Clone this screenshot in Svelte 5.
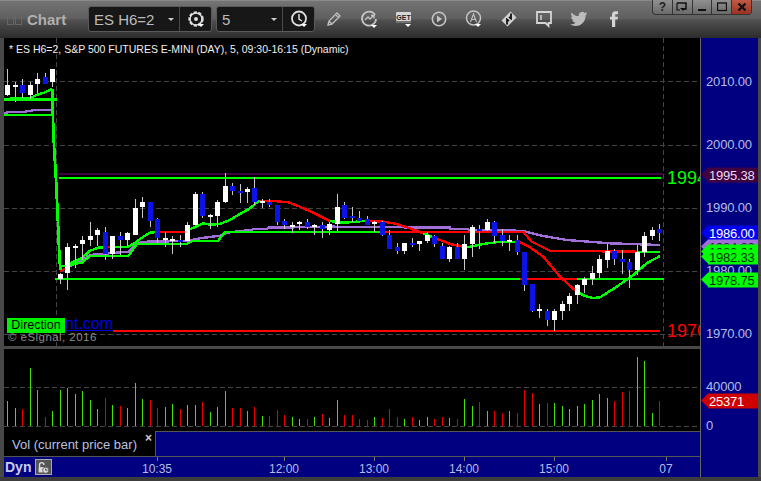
<script>
  // [high, bodyTop, bodyBottom, low, colour]  w = white, b = blue
  const raw = `69 85 95 96 w,82 85 87 102 w,79 85 93 98 b,82 85 95 99 w,73 79 84 93 w,73 77 84 84 b,69 69 82 87 w,273 274 279 284 w,243 247 273 290 w,244 246 248 268 w,236 240 244 260 w,222 236 240 246 w,228 230 235 246 w,227 232 254 260 b,236 236 254 259 w,232 236 240 255 b,232 233 240 246 w,199 208 235 235 w,197 202 207 218 w,202 202 221 227 b,218 219 238 243 b,232 238 240 247 w,236 239 241 254 w,235 240 242 247 b,222 225 241 241 w,192 194 225 225 w,192 194 216 218 b,214 215 217 229 w,200 202 216 227 w,173 186 202 203 w,183 186 191 195 b,184 191 193 203 b,187 189 192 203 w,177 188 202 205 b,199 201 203 208 w,199 202 205 207 b,205 205 222 225 b,219 221 225 229 b,222 225 227 233 w,221 222 224 230 w,219 222 227 229 b,224 225 227 235 w,222 225 229 238 b,222 224 230 235 w,194 207 224 231 w,202 205 218 219 b,207 216 218 222 b,211 218 221 222 b,216 219 225 225 b,221 222 224 232 w,221 222 235 236 b,230 235 249 249 b,243 247 251 254 b,243 243 251 254 w,238 243 245 247 b,241 241 244 251 w,232 235 241 243 w,235 236 244 247 b,243 246 259 259 b,246 247 259 262 w,243 247 259 259 b,235 244 259 270 w,225 227 244 257 w,225 229 231 249 b,219 222 230 231 w,221 222 236 243 b,229 235 241 246 b,235 240 242 251 w,235 240 252 255 b,252 252 285 291 b,284 284 311 312 b,304 309 311 318 w,309 311 320 326 b,309 311 320 331 w,301 304 311 320 w,293 296 304 311 w,284 285 295 304 w,277 279 285 293 w,266 273 279 285 w,255 259 273 278 w,244 251 260 268 w,249 251 259 265 b,250 259 262 274 b,259 262 270 288 b,245 252 270 275 w,232 236 252 257 w,227 230 236 240 w,224 229 233 241 b`;
  const barX = (i) => 7 + (i <= 32 ? Math.ceil(7.5 * i) : Math.floor(7.5 * i));
  const candles = raw.split(',').map((s, i) => {
    const p = s.split(' ');
    return { x: barX(i), hi: +p[0], top: +p[1], bot: +p[2], lo: +p[3], c: p[4] };
  });
  const volRaw = `401g 408g 409r 368g 390g 417r 411g 390g 388g 394g 391g 400g 409g 398r 405g 406r 408g 383g 399g 400r 408r 407g 404g 409r 405g 405g 402r 412g 407g 391g 408r 408r 411g 407r 416g 416r 410r 415r 417g 419g 419r 417g 414r 418g 400g 415r 415r 419r 420r 417g 418r 409r 417r 419g 417r 420g 417g 419r 417r 418g 419r 399g 406g 402r 411g 411r 413r 411g 413r 390r 393r 404g 403r 403g 406g 409g 406g 404g 400g 394g 398g 401r 392r 391r 357g 361g 413g 401r`;
  const vols = volRaw.split(' ').map((s, i) => ({ x: barX(i), y: parseInt(s), c: s.endsWith('g') ? '#44e000' : '#e80000' }));

  const conv = (a, ox, oy) => { let r = ''; for (let i = 0; i < a.length; i += 2) r += `${(ox + a[i] / 3).toFixed(1)},${(oy + a[i + 1] / 3).toFixed(1)} `; return r; };
  const z3 = (...a) => conv(a, 0, 60), z4 = (...a) => conv(a, 250, 160), z5 = (...a) => conv(a, 500, 160);

  const purple = [
    z3(12,159,30,156,75,155,105,150,157,149),
    z3(210,618,245,602,270,585,300,582,385,575,410,550,440,545,560,543,600,535,660,527,680,518,750,510) + z4(0,212,10,207,50,207,55,203,250,200,600,203,600,207,650,207,660,210,750,210) + z5(0,210,70,213,130,228,200,240,330,250,480,255)
  ];
  const greens = [
    z3(12,164,157,164),
    z3(180,620,245,608,270,588,385,588,410,553,560,552,580,542,655,542,675,516,750,515) + z4(0,215,395,215),
    z3(205,612,245,595,270,572,295,563,325,562),
    z3(345,561,385,560,405,548,430,530,450,518,480,515),
    z3(555,515,570,508,610,490,630,494,660,492,690,480,720,462,750,445) + z4(20,128,30,122),
    z4(240,183,280,188,310,186,345,182),
    z4(520,220,545,230),
    z4(640,260,660,260,700,252,750,245) + z5(60,245),
    z5(230,395,255,408,280,414,300,412,350,380,400,345,440,310,480,288)
  ];
  const reds = [
    z3(180,635,195,625),
    z3(325,561,345,561),
    z3(480,516,555,516),
    z4(30,122,80,124,115,127,145,138,190,158,240,183),
    z4(345,182,400,185,440,192,480,205,520,220),
    z4(545,230,570,240,600,252,640,260),
    z5(60,247,90,262,130,290,180,350,230,395),
    z4(395,215,750,215) + z5(70,215,95,245,150,272,480,276)
  ];
  const grid = [81.5, 145.5, 208.5, 271.5, 334.5];
  const prices = [
    { t: '2010.00', y: 82 }, { t: '2000.00', y: 145 }, { t: '1990.00', y: 208 }, { t: '1980.00', y: 271 }, { t: '1970.00', y: 334 }
  ];
  const tags = [
    { t: '1995.38', y: 174.5, bg: '#400040', fg: '#e8dcec' },
    { t: '1986.00', y: 232.5, bg: '#0000f0', fg: '#ffffff' },
    { t: '1984.33', y: 247, bg: '#a070d8', fg: '#1a1a1a' },
    { t: '1982.91', y: 252, bg: '#00ff00', fg: '#003000' },
    { t: '1982.33', y: 257, bg: '#00ff00', fg: '#003000' },
    { t: '1978.75', y: 279.5, bg: '#00ff00', fg: '#003000' }
  ];
  const times = [
    { t: '10:35', x: 157 }, { t: '12:00', x: 284 }, { t: '13:00', x: 374 }, { t: '14:00', x: 464 }, { t: '15:00', x: 554 }, { t: '07', x: 666 }
  ];
</script>

<div class="window">
  <header class="toolbar">
    <span class="grip"><i></i><i></i></span>
    <span class="title">Chart</span>
    <div class="combo first">
      <span class="value">ES H6=2</span><span class="caret"></span>
      <button class="cbtn" aria-label="symbol">
        <svg width="20" height="20" viewBox="0 0 20 20"><circle cx="10" cy="10" r="6.5" fill="none" stroke="#ddd" stroke-width="2.4" stroke-dasharray="3 1.6"/><circle cx="10" cy="10" r="6" fill="none" stroke="#ddd" stroke-width="1.4"/><circle cx="10" cy="10" r="2" fill="#ddd"/><path d="M12 15h6l-3 3z" fill="#fff"/></svg>
      </button>
    </div>
    <div class="combo second">
      <span class="value">5</span><span class="caret"></span>
      <button class="cbtn" aria-label="interval">
        <svg width="20" height="20" viewBox="0 0 20 20"><circle cx="10" cy="9.5" r="7" fill="none" stroke="#ddd" stroke-width="1.8"/><path d="M10 5v5l3 2" fill="none" stroke="#ddd" stroke-width="1.5"/><path d="M12 15h6l-3 3z" fill="#fff"/></svg>
      </button>
    </div>
    <div class="tools">
      <span><svg width="18" height="18" viewBox="0 0 18 18"><path d="M3 15l1-4 8-8 3 3-8 8zM4 11l3 3M10.500 4.500l3 3" fill="none" stroke="#bbb" stroke-width="1.4"/></svg></span>
      <span><svg width="18" height="20" viewBox="0 0 18 20"><path d="M15 6a7 7 0 1 0 1 4" fill="none" stroke="#c4c4c4" stroke-width="1.8"/><path d="M5 11l3-3 2 2 3-3M11 6.500h3v3" fill="none" stroke="#c4c4c4" stroke-width="1.3"/><path d="M11 16h6l-3 3z" fill="#fff"/></svg></span>
      <span><svg width="18" height="20" viewBox="0 0 18 20"><rect x="1" y="3" width="15" height="9" rx="1" fill="#d6d6d6"/><text x="8.500" y="10.500" text-anchor="middle" class="gettxt">GET</text><path d="M1 13h15" stroke="#999"/><path d="M10 15h6l-3 3z" fill="#fff"/></svg></span>
      <span><svg width="18" height="18" viewBox="0 0 18 18"><circle cx="9" cy="9" r="6.700" fill="none" stroke="#c4c4c4" stroke-width="1.600"/><path d="M7 5.500l5 3.500-5 3.500z" fill="#c4c4c4"/></svg></span>
      <span><svg width="20" height="20" viewBox="0 0 20 20"><circle cx="9.500" cy="9" r="7" fill="none" stroke="#c4c4c4" stroke-width="1.500"/><path d="M6.500 13l3-8 3 8M7.500 10.500h4" fill="none" stroke="#c4c4c4" stroke-width="1.100"/><path d="M11 15h6l-3 3z" fill="#fff"/></svg></span>
      <span><svg width="18" height="18" viewBox="0 0 18 18"><path d="M1.500 10.500l9-9 6 6-9 9z" fill="#d0d0d0"/><path d="M11 3.500v5l-2-1.500M7 14.500v-5l2 1.500" fill="none" stroke="#111" stroke-width="1.800"/></svg></span>
      <span><svg width="18" height="18" viewBox="0 0 18 18"><path d="M2 2h14v11h-2.500v3l-3-3H2z" fill="none" stroke="#d4d4d4" stroke-width="1.800"/><path d="M6 5v5" stroke="#d4d4d4" stroke-width="1.500"/></svg></span>
      <span><svg width="18" height="16" viewBox="0 0 18 16"><path d="M17.500 2.300c-.6.300-1.300.5-2 .6.700-.4 1.300-1.100 1.500-1.900-.7.400-1.400.7-2.200.9a3.500 3.500 0 0 0-6 3.200C5.900 5 3.300 3.600 1.600 1.400c-.9 1.600-.5 3.600 1.100 4.700-.6 0-1.100-.2-1.600-.4 0 1.700 1.200 3.100 2.800 3.500-.5.100-1 .2-1.600.1.400 1.400 1.700 2.400 3.300 2.400C4 12.900 2.100 13.500.2 13.300c1.600 1 3.400 1.600 5.400 1.600 6.500 0 10.200-5.500 10-10.400.7-.5 1.400-1.200 1.900-2.200z" fill="#bcbcbc"/></svg></span>
      <span><svg width="10" height="18" viewBox="0 0 10 18"><path d="M3 17V9.500H1V6.700h2V5c0-2.400 1.200-3.700 3.500-3.700H9v2.900H7.300C6.400 4.200 6.200 4.600 6.200 5.400v1.300H9l-.4 2.800H6.200V17z" fill="#d4d4d4"/></svg></span>
    </div>
    <div class="winbtns">
      <span class="wb q">?</span>
      <span class="wb"><svg width="12" height="10" viewBox="0 0 12 10"><path d="M1 1h9v6H7" fill="none" stroke="#111" stroke-width="1.500"/><path d="M1 1v7h3" fill="none" stroke="#111" stroke-width="1.200"/><path d="M4 6h6l-3 3z" fill="#111"/></svg></span>
      <span class="wb"><svg width="10" height="10" viewBox="0 0 10 10"><path d="M1 8h8" stroke="#111" stroke-width="2"/></svg></span>
      <span class="wb"><svg width="10" height="10" viewBox="0 0 10 10"><rect x=".5" y="1" width="9" height="7.500" fill="none" stroke="#111" stroke-width="1.300"/></svg></span>
      <span class="wb close"><svg width="10" height="10" viewBox="0 0 10 10"><path d="M1.500 1.500l7 7M8.500 1.500l-7 7" stroke="#111" stroke-width="2.400"/></svg></span>
    </div>
  </header>

  <div class="body">
    <div class="panes">
      <div class="pane price">
        <svg class="plot" width="696" height="308" viewBox="4 38 696 308" shape-rendering="crispEdges">
          {#each grid as y}
            <line x1="4" x2="700" y1={y} y2={y} class="grid" />
          {/each}
          <line x1="56.500" x2="56.500" y1="38" y2="346" class="grid" />
          <line x1="663.500" x2="663.500" y1="38" y2="346" class="grid" />

          <text x="667" y="184" class="big g">1994</text>
          <text x="667" y="337" class="big r">1970</text>

          <rect x="57" y="173" width="606" height="2" fill="#400040" />
          <rect x="59" y="176.500" width="602" height="2" fill="#00ff00" />
          <rect x="55" y="278" width="609" height="2" fill="#00ff00" />
          <rect x="520" y="278" width="57" height="2" fill="#ff0000" />
          <rect x="113" y="330" width="547" height="2" fill="#ff0000" />

          <rect x="4" y="98" width="53" height="3" fill="#00ff00" />
          {#each purple as p}<polyline points={p} class="ln" stroke="#a070d8" />{/each}
          {#each greens as p}<polyline points={p} class="ln" stroke="#00ff00" />{/each}
          {#each reds as p}<polyline points={p} class="ln" stroke="#ff0000" />{/each}
          <polyline points={z5(410,276,480,276)} class="ln" stroke="#00ff00" />
          <polyline points={z3(30,114,90,114,110,105,135,97,157,87)} class="ln" stroke="#00ff00" />
          <polyline points={z3(157,87,160,210,163,275,167,340,172,440,175,510,178,585,181,630)} class="ln fat" stroke="#00ff00" />

          {#each candles as k}
            <rect x={k.x} y={k.hi} width="1" height={k.lo - k.hi} fill="#c8c8c8" />
            <rect x={k.x - 2} y={k.top} width="5" height={k.bot - k.top} fill={k.c === 'w' ? '#ffffff' : '#0a14e6'} />
          {/each}
        </svg>
        <span class="link">nt.com</span>
        <span class="dir">Direction</span>
        <div class="copy">© eSignal, 2016</div>
      </div>
      <div class="pane vol">
        <svg class="plot" width="696" height="82" viewBox="4 349 696 82" shape-rendering="crispEdges">
          <line x1="4" x2="700" y1="387.500" y2="387.500" class="grid" />
          <line x1="4" x2="700" y1="426.500" y2="426.500" class="grid" />
          {#each vols as v}
            <rect x={v.x} y={v.y} width="1" height={426 - v.y} fill={v.c} />
          {/each}
        </svg>
      </div>
      <div class="legend">
        <div class="legbox"><span>Vol (current price bar)</span><b>×</b></div>
        <div class="legfill"></div>
      </div>
      <div class="times">
        <span class="dyn">Dyn</span>
        <span class="lock"><svg width="17" height="16" viewBox="0 0 17 16"><path d="M4 7V4.500a2.500 2.500 0 0 1 5 0" fill="none" stroke="#ddd" stroke-width="1.500"/><rect x="3" y="7" width="7" height="6" fill="#ddd"/><circle cx="11" cy="10.500" r="3.500" fill="#ddd" stroke="#555"/><path d="M11 8.500v2h2" fill="none" stroke="#333"/></svg></span>
        {#each times as t}
          <i class="tick" style="left:{t.x - 4}px"></i>
          <span class="time" style="left:{t.x - 4}px">{t.t}</span>
        {/each}
      </div>
    </div>
    <aside class="axis">
      <div class="axis-price">
        {#each prices as p}<span class="pl" style="top:{p.y - 38}px">{p.t}</span>{/each}
        {#each tags as t}
          <span class="tag" style="top:{t.y - 38}px;--bg:{t.bg};color:{t.fg}">{t.t}</span>
        {/each}
      </div>
      <div class="axis-vol">
        <span class="pl" style="top:41px">40000</span>
        <span class="pl" style="top:80px">0</span>
        <span class="tag vtag" style="top:55px">25371</span>
      </div>
      <div class="axis-rest"></div>
    </aside>
  </div>
  <div class="foot"></div>
  <div class="title-text">* ES H6=2, S&amp;P 500 FUTURES E-MINI (DAY), 5, 09:30-16:15 (Dynamic)</div>
</div>

<style>
  :global(body) { margin: 0; background: #333; }
  .window { position: relative; width: 761px; height: 481px; overflow: hidden; background: #484848; font-family: "Liberation Sans", Arial, sans-serif; }
  .toolbar { position: relative; height: 38px; box-sizing: border-box; display: flex; align-items: center; padding: 0 0 1px 7px; border-top: 1px solid #8a8a8a; background: linear-gradient(#747474 0, #5e5e5e 18px, #505050 19px, #2c2c2c 37px); }
  .grip { display: flex; gap: 1px; margin-right: 5px; }
  .grip i { width: 7px; height: 12px; border: 1px solid #666; box-sizing: border-box; }
  .title { font-weight: bold; font-size: 15px; color: #b0b0b0; width: 39px; margin-right: 22px; }
  .combo { display: flex; align-items: center; height: 26px; box-sizing: border-box; background: #171717; border: 1px solid #5a5a5a; border-radius: 3px; color: #bbb; font-size: 15px; margin-right: 4px; flex: none; }
  .first { width: 124px; }
  .second { width: 99px; margin-right: 0; }
  .value { padding-left: 5px; flex: 1; }
  .caret { width: 0; height: 0; border: 3px solid transparent; border-top: 3px solid #ccc; border-bottom: 0; margin-right: 5px; }
  .cbtn { width: 32px; height: 24px; padding: 0; border: 0; border-left: 1px solid #4a4a4a; background: none; display: flex; align-items: center; justify-content: center; }
  .tools { display: grid; grid-template-columns: repeat(9, 35px); margin-left: 1px; }
  .tools span { display: flex; align-items: center; justify-content: center; height: 20px; }
  .gettxt { font: bold 7px "Liberation Sans", sans-serif; fill: #222; }
  .winbtns { position: absolute; top: -1px; left: 652px; width: 100px; height: 15px; display: flex; box-sizing: border-box; border: 1px solid #333; border-top: 0; border-radius: 0 0 4px 4px; background: linear-gradient(#909090, #6a6a6a); overflow: hidden; }
  .wb { flex: 1; display: flex; align-items: center; justify-content: center; border-right: 1px solid #333; color: #222; font: bold 12px "Liberation Sans", sans-serif; }
  .wb:last-child { border-right: 0; }
  .close { background: linear-gradient(#c05a44, #9c3222); }

  .body { display: flex; height: 439px; padding-left: 4px; }
  .panes { width: 696px; display: flex; flex-direction: column; }
  .pane { position: relative; background: #000; }
  .price { height: 308px; }
  .vol { height: 82px; margin-top: 3px; }
  .plot { display: block; }
  .grid { stroke: #444; stroke-width: 1; stroke-dasharray: 5 3; }
  .ln { fill: none; stroke-width: 2.400; }
  .fat { stroke-width: 2.800; }
  .big { font: 18px "Liberation Sans", sans-serif; }
  .big.g { fill: #00ff00; }
  .big.r { fill: #ff0000; }
  .link { position: absolute; left: 61px; top: 277px; font-size: 16px; line-height: 18px; color: #0000e0; text-decoration: underline; }
  .dir { position: absolute; left: 3px; top: 280px; width: 58px; height: 15px; line-height: 15px; background: #00f000; color: #000; font-size: 12.500px; text-align: center; }
  .copy { position: absolute; left: 4px; top: 293px; font-size: 11.500px; color: #8c8c8c; letter-spacing: .45px; }

  .legend { display: flex; height: 26px; box-sizing: border-box; }
  .legbox { position: relative; width: 151px; background: #000; border-bottom: 1px solid #555; color: #b8c0e0; font-size: 13px; line-height: 24px; padding-left: 8px; box-sizing: border-box; }
  .legbox span { position: relative; top: 2px; }
  .legbox b { position: absolute; left: 141px; top: 0; line-height: 14px; font-size: 12px; color: #ccc; }
  .legfill { flex: 1; background: #000080; border-top: 1px solid #555; border-left: 1px solid #555; border-bottom: 1px solid #555; }
  .times { position: relative; height: 20px; background: #000080; }
  .dyn { position: absolute; left: 1px; top: 2px; font-weight: bold; font-size: 14px; color: #c8cce8; }
  .lock { position: absolute; left: 31px; top: 2px; width: 17px; height: 16px; background: #555; border: 1px solid #aaa; box-sizing: border-box; display: flex; }
  .tick { position: absolute; top: 0; width: 1px; height: 4px; background: #777; }
  .time { position: absolute; top: 5px; transform: translateX(-50%); font-size: 12px; line-height: 14px; color: #b4bce4; }

  .axis { width: 57px; background: #000080; border-left: 1px solid #666; display: flex; flex-direction: column; font-size: 13px; position: relative; }
  .axis-price { position: relative; height: 308px; }
  .axis-vol { position: relative; height: 85px; }
  .axis-rest { flex: 1; }
  .pl { position: absolute; left: 5px; transform: translateY(-50%); color: #b4bce4; line-height: 14px; letter-spacing: -.15px; }
  .tag { position: absolute; left: 7px; right: 0; height: 15px; line-height: 15px; transform: translateY(-50%); padding-left: 1px; font-size: 13px; letter-spacing: -.2px; background: var(--bg); }
  .tag::before { content: ""; position: absolute; left: -7px; top: 0; border-style: solid; border-width: 7.500px 7px 7.500px 0; border-color: transparent var(--bg) transparent transparent; }
  .vtag { --bg: #d00000; color: #fff; }
  .foot { height: 4px; background: #3c3c3c; }
  .title-text { position: absolute; left: 9px; top: 43px; font-size: 10.500px; color: #f0f0f0; white-space: nowrap; }
</style>
